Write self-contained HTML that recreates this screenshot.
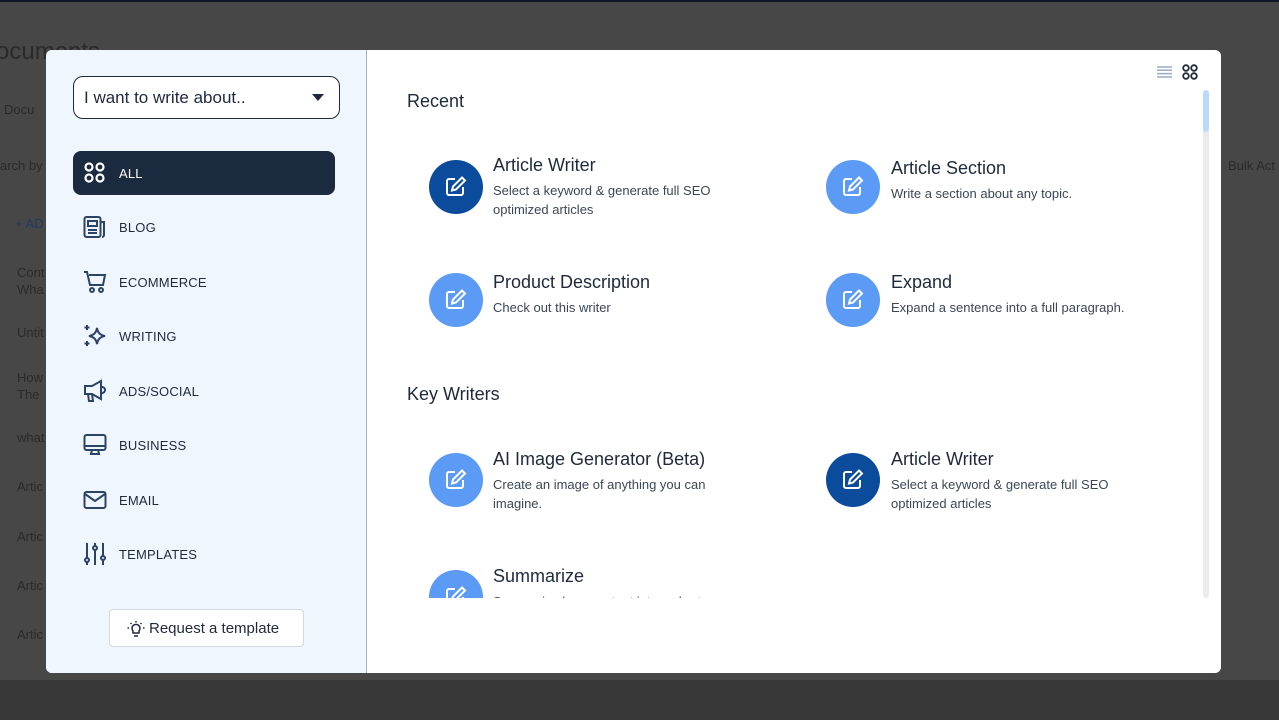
<!DOCTYPE html>
<html><head><meta charset="utf-8"><style>
*{margin:0;padding:0;box-sizing:border-box}
body{width:1279px;height:720px;overflow:hidden;background:#474747;font-family:"Liberation Sans",sans-serif;position:relative}
.a{position:absolute}
.bg{color:#2a2a2a;font-size:13px}
.modal{left:46px;top:50px;width:1175px;height:623px;background:#fff;border-radius:6px;overflow:hidden}
.side{left:0;top:0;width:321px;height:623px;background:#f0f6fd;border-right:1px solid #9fb0c4}
.sel{left:27px;top:26px;width:267px;height:43px;border:1.5px solid #1e293b;border-radius:10px;background:#fff;font-size:17px;color:#1e293b;padding:11px 0 0 10px}
.nav{left:27px;width:262px;height:44px;font-size:13px;color:#1e293b;letter-spacing:.2px}
.nav span{position:absolute;left:46px;top:15px}
.nav svg{position:absolute;left:10px;top:10px}
.act{background:#1b2a3e;border-radius:8px;color:#fff}
.btn{left:63px;top:559px;width:195px;height:38px;border:1px solid #d4d9e0;border-radius:4px;background:#fff;font-size:15px;color:#1e293b;padding:10px 0 0 39px}
h2{position:absolute;font-size:18px;font-weight:normal;color:#1e293b}
.c{position:absolute;width:54px;height:54px;border-radius:50%;background:#5b9af5}
.c.d{background:#0b4b9b}
.c svg{position:absolute;left:15px;top:15px}
.t{position:absolute;font-size:18px;color:#1e293b}
.s{position:absolute;font-size:13px;color:#3b4656;line-height:19px;width:260px}
</style></head><body>
<div class="a" style="left:0;top:0;width:1279px;height:2px;background:#0f172a"></div>
<div class="a" style="left:0;top:680px;width:1279px;height:40px;background:#383838"></div>
<div class="a bg" style="left:-4px;top:38px;font-size:24px">ocuments</div>
<div class="a bg" style="left:4px;top:102px">Docu</div>
<div class="a bg" style="left:0;top:158px">arch by</div>
<div class="a bg" style="left:15px;top:216px;color:#1f3b63">+ AD</div>
<div class="a bg" style="left:17px;top:264px;line-height:17px">Cont<br>Wha</div>
<div class="a bg" style="left:17px;top:325px">Untit</div>
<div class="a bg" style="left:17px;top:369px;line-height:17px">How<br>The</div>
<div class="a bg" style="left:17px;top:430px">what</div>
<div class="a bg" style="left:17px;top:479px">Artic</div>
<div class="a bg" style="left:17px;top:529px">Artic</div>
<div class="a bg" style="left:17px;top:578px">Artic</div>
<div class="a bg" style="left:17px;top:627px">Artic</div>
<div class="a bg" style="left:1228px;top:158px">Bulk Act</div>

<div class="a modal">
<div class="a side">
<div class="a sel">I want to write about..<svg class="a" style="left:238px;top:17px" width="12" height="7"><path d="M0 0h12L6 7z" fill="#1e293b"/></svg></div>
<div class="a nav act" style="top:101px"><svg width="24" height="24" fill="none" stroke="#fff" stroke-width="2.2"><circle cx="6" cy="6" r="3.5"/><circle cx="17" cy="6" r="3.5"/><circle cx="6" cy="17" r="3.5"/><circle cx="17" cy="17" r="3.5"/></svg><span>ALL</span></div>
<div class="a nav" style="top:155px"><svg width="24" height="24" fill="none" stroke="#2b4466" stroke-width="2"><rect x="1.5" y="2" width="16" height="20" rx="2"/><path d="M18 7h3v13a2 2 0 0 1-2 2"/><rect x="5" y="6" width="9" height="5"/><path d="M5 15h9M5 18h9"/></svg><span>BLOG</span></div>
<div class="a nav" style="top:210px"><svg width="24" height="24" fill="none" stroke="#2b4466" stroke-width="2"><path d="M1 2h3l3 13h13l2-10H6"/><circle cx="9" cy="20" r="2"/><circle cx="18" cy="20" r="2"/></svg><span>ECOMMERCE</span></div>
<div class="a nav" style="top:264px"><svg width="24" height="24" fill="none" stroke="#2b4466" stroke-width="2"><path d="M14 4c1 5 3 7 8 8-5 1-7 3-8 8-1-5-3-7-8-8 5-1 7-3 8-8z"/><path d="M4 1v5M1.5 3.5h5M4 17v5M1.5 19.5h5"/></svg><span>WRITING</span></div>
<div class="a nav" style="top:319px"><svg width="24" height="24" fill="none" stroke="#2b4466" stroke-width="2"><path d="M2 7h7l9-5v18l-9-5H2z"/><path d="M5 15l1 7h4l-1-7M19 8a3 3 0 0 1 0 6"/></svg><span>ADS/SOCIAL</span></div>
<div class="a nav" style="top:373px"><svg width="24" height="24" fill="none" stroke="#2b4466" stroke-width="2"><rect x="1.5" y="2" width="21" height="15" rx="2"/><path d="M1.5 13h21M9 17l-1 4h8l-1-4M7 21h10"/></svg><span>BUSINESS</span></div>
<div class="a nav" style="top:428px"><svg width="24" height="24" fill="none" stroke="#2b4466" stroke-width="2"><rect x="1.5" y="4" width="21" height="16" rx="2"/><path d="M2 6l10 7 10-7"/></svg><span>EMAIL</span></div>
<div class="a nav" style="top:482px"><svg width="24" height="24" fill="none" stroke="#2b4466" stroke-width="2"><path d="M4 1v15M4 20v3M12 1v3M12 8v15M20 1v13M20 18v5"/><circle cx="4" cy="18" r="2"/><circle cx="12" cy="6" r="2"/><circle cx="20" cy="16" r="2"/></svg><span>TEMPLATES</span></div>
<div class="a btn"><svg class="a" style="left:17px;top:10px" width="18" height="18" fill="none" stroke="#1e293b" stroke-width="1.5"><path d="M6 11a4 4 0 1 1 6 0v2H6z"/><path d="M7 16h4M9 1v1.5M2 8H.5M17.5 8H16M3.5 3l1 1M14.5 3l-1 1"/></svg>Request a template</div>
</div>

<svg class="a" style="left:1111px;top:16px" width="15" height="12" stroke="#9aabc0" stroke-width="1.5"><path d="M0 1h15M0 4.3h15M0 7.6h15M0 11h15"/></svg>
<svg class="a" style="left:1136px;top:14px" width="16" height="16" fill="none" stroke="#1e293b" stroke-width="1.8"><circle cx="4" cy="4" r="2.8"/><circle cx="12" cy="4" r="2.8"/><circle cx="4" cy="12" r="2.8"/><circle cx="12" cy="12" r="2.8"/></svg>
<div class="a" style="left:1157px;top:40px;width:6px;height:508px;background:#ececec;border-radius:3px"></div>
<div class="a" style="left:1157px;top:40px;width:6px;height:42px;background:#b9dafd;border-radius:3px"></div>

<div class="a" style="left:321px;top:0;width:830px;height:548px;overflow:hidden">
<h2 style="left:40px;top:41px">Recent</h2>
<h2 style="left:40px;top:334px">Key Writers</h2>
</div>
</div>

<div class="a" style="left:367px;top:50px;width:834px;height:548px;overflow:hidden">
<div id="x"></div>
</div>
<div class="a" style="left:368px;top:50px;width:834px;height:548px;overflow:hidden">
<div class="c d" style="left:61px;top:110px"><svg width="24" height="24" fill="none" stroke="#fff" stroke-width="2"><path d="M11 4H5a2 2 0 0 0-2 2v12a2 2 0 0 0 2 2h12a2 2 0 0 0 2-2v-6"/><path d="M18 2.5l3 3L12 14.5l-4 1 1-4z"/></svg></div>
<div class="t" style="left:125px;top:105px">Article Writer</div>
<div class="s" style="left:125px;top:131px">Select a keyword &amp; generate full SEO optimized articles</div>

<div class="c" style="left:458px;top:110px"><svg width="24" height="24" fill="none" stroke="#fff" stroke-width="2"><path d="M11 4H5a2 2 0 0 0-2 2v12a2 2 0 0 0 2 2h12a2 2 0 0 0 2-2v-6"/><path d="M18 2.5l3 3L12 14.5l-4 1 1-4z"/></svg></div>
<div class="t" style="left:523px;top:108px">Article Section</div>
<div class="s" style="left:523px;top:134px;width:300px">Write a section about any topic.</div>

<div class="c" style="left:61px;top:223px"><svg width="24" height="24" fill="none" stroke="#fff" stroke-width="2"><path d="M11 4H5a2 2 0 0 0-2 2v12a2 2 0 0 0 2 2h12a2 2 0 0 0 2-2v-6"/><path d="M18 2.5l3 3L12 14.5l-4 1 1-4z"/></svg></div>
<div class="t" style="left:125px;top:222px">Product Description</div>
<div class="s" style="left:125px;top:248px">Check out this writer</div>

<div class="c" style="left:458px;top:223px"><svg width="24" height="24" fill="none" stroke="#fff" stroke-width="2"><path d="M11 4H5a2 2 0 0 0-2 2v12a2 2 0 0 0 2 2h12a2 2 0 0 0 2-2v-6"/><path d="M18 2.5l3 3L12 14.5l-4 1 1-4z"/></svg></div>
<div class="t" style="left:523px;top:222px">Expand</div>
<div class="s" style="left:523px;top:248px;width:300px">Expand a sentence into a full paragraph.</div>

<div class="c" style="left:61px;top:403px"><svg width="24" height="24" fill="none" stroke="#fff" stroke-width="2"><path d="M11 4H5a2 2 0 0 0-2 2v12a2 2 0 0 0 2 2h12a2 2 0 0 0 2-2v-6"/><path d="M18 2.5l3 3L12 14.5l-4 1 1-4z"/></svg></div>
<div class="t" style="left:125px;top:399px">AI Image Generator (Beta)</div>
<div class="s" style="left:125px;top:425px">Create an image of anything you can imagine.</div>

<div class="c d" style="left:458px;top:403px"><svg width="24" height="24" fill="none" stroke="#fff" stroke-width="2"><path d="M11 4H5a2 2 0 0 0-2 2v12a2 2 0 0 0 2 2h12a2 2 0 0 0 2-2v-6"/><path d="M18 2.5l3 3L12 14.5l-4 1 1-4z"/></svg></div>
<div class="t" style="left:523px;top:399px">Article Writer</div>
<div class="s" style="left:523px;top:425px">Select a keyword &amp; generate full SEO optimized articles</div>

<div class="c" style="left:61px;top:520px"><svg width="24" height="24" fill="none" stroke="#fff" stroke-width="2"><path d="M11 4H5a2 2 0 0 0-2 2v12a2 2 0 0 0 2 2h12a2 2 0 0 0 2-2v-6"/><path d="M18 2.5l3 3L12 14.5l-4 1 1-4z"/></svg></div>
<div class="t" style="left:125px;top:516px">Summarize</div>
<div class="s" style="left:125px;top:542px">Summarize long content into a short</div>
</div>
</body></html>
